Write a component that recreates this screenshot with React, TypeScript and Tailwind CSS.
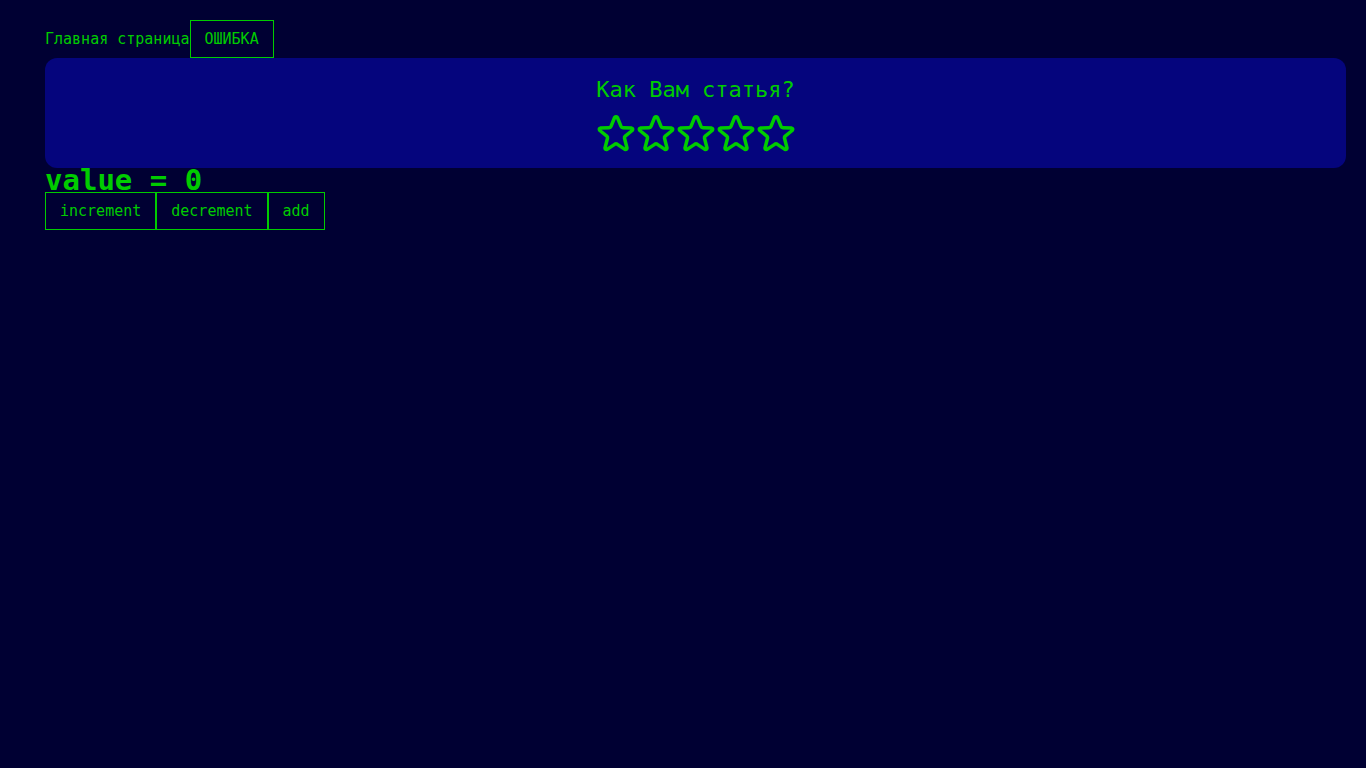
import { useState } from "react";

const STARS = [1, 2, 3, 4, 5];

function Star({ filled }: { filled: boolean }) {
  return (
    <svg
      className="block size-10"
      viewBox="0 0 40 40"
      fill={filled ? "currentColor" : "none"}
      stroke="currentColor"
      strokeWidth="3.5"
      strokeLinejoin="round"
      aria-hidden="true"
    >
      <path d="M18.6 4.5Q20 2.900 21.4 4.500L25 13.400Q25.500 14.700 26.900 14.700L35.600 15.100Q37.500 15.700 36.200 17.500L29.200 23.100Q28.200 24 28.500 25.300L31 35Q30.800 37 28.900 36.400L21 31.100Q20 30.500 19 31.100L11.100 36.400Q9.200 37 9 35L11.500 25.300Q11.800 24 10.800 23.100L3.800 17.500Q2.500 15.700 4.400 15.100L13.100 14.700Q14.500 14.700 15 13.400Z" />
    </svg>
  );
}

const buttonClass = "cursor-pointer border border-[#00cc00] px-3.5 py-1.5";

export default function App() {
  const [value, setValue] = useState(0);
  const [rating, setRating] = useState(0);
  const [failed, setFailed] = useState(false);

  if (failed) throw new Error("ОШИБКА");

  return (
    <div className="min-h-screen bg-[#000033] py-5 pr-5 pl-[45px] font-[Consolas,'DejaVu_Sans_Mono',monospace] text-[15px] leading-6 text-[#00cc00]">
      <div className="flex items-center">
        <span>Главная страница</span>
        <button type="button" className={buttonClass} onClick={() => setFailed(true)}>
          ОШИБКА
        </button>
      </div>
      <section className="flex flex-col items-center rounded-xl bg-[#05057d] px-5 pt-5 pb-[15px]">
        <p className="pb-[11px] text-[22px] leading-6">Как Вам статья?</p>
        <div className="flex">
          {STARS.map((n) => (
            <button
              key={n}
              type="button"
              className="cursor-pointer"
              aria-label={`Оценка ${n}`}
              onClick={() => setRating(n)}
            >
              <Star filled={n <= rating} />
            </button>
          ))}
        </div>
      </section>
      <h1 className="text-[29px] leading-6 font-bold">value = {value}</h1>
      <div className="flex">
        <button type="button" className={buttonClass} onClick={() => setValue(value + 1)}>
          increment
        </button>
        <button type="button" className={buttonClass} onClick={() => setValue(value - 1)}>
          decrement
        </button>
        <button type="button" className={buttonClass} onClick={() => setValue(value + 5)}>
          add
        </button>
      </div>
    </div>
  );
}
